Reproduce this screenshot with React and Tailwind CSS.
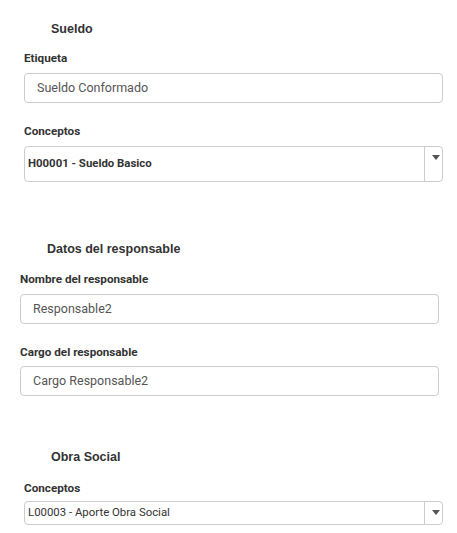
import React from 'react';

const Heading = ({ children, className = '' }) => (
  <div className={`pl-[27px] text-[12.5px] leading-[18px] font-bold text-[#333] font-['Liberation_Sans',Arial,sans-serif] ${className}`}>
    {children}
  </div>
);

const Label = ({ children, className = '' }) => (
  <div className={`text-[11.7px] leading-[18px] font-bold text-[#333] ${className}`}>{children}</div>
);

const TextInput = ({ value, className = '' }) => (
  <div className={`h-[30px] flex items-center px-3 border border-[#ccc] rounded-[4px] bg-white text-[12.5px] text-[#555] ${className}`}>
    {value}
  </div>
);

const Select = ({ value, bold, tall }) => (
  <div className={`relative flex border border-[#ccc] rounded-[4px] bg-white text-[#333] text-[11.4px] ${tall ? 'h-[36px]' : 'h-[24px]'}`}>
    <div className={`flex-1 flex items-center pl-[3px] truncate ${bold ? 'font-bold' : ''}`}>{value}</div>
    <div className="w-[18px] border-l border-[#ccc] relative">
      <span className="absolute top-[8px] left-[7px] w-0 h-0 border-l-[4px] border-r-[4px] border-t-[5px] border-l-transparent border-r-transparent border-t-[#555]" />
    </div>
  </div>
);

export default function App() {
  return (
    <div className="w-[457px] h-[533px] bg-white font-['Roboto',sans-serif] overflow-hidden">
      {/* Sueldo */}
      <section className="pl-[24px] pr-[14px] pt-[20px]">
        <Heading>Sueldo</Heading>
        <Label className="mt-[11px]">Etiqueta</Label>
        <TextInput value="Sueldo Conformado" className="mt-[6px]" />
        <Label className="mt-[19px]">Conceptos</Label>
        <div className="mt-[6px]">
          <Select value="H00001 - Sueldo Basico" bold tall />
        </div>
      </section>

      {/* Datos del responsable */}
      <section className="pl-[20px] pr-[18px] mt-[58px]">
        <Heading>Datos del responsable</Heading>
        <Label className="mt-[12px]">Nombre del responsable</Label>
        <TextInput value="Responsable2" className="mt-[6px] h-[29px]" />
        <Label className="mt-[19px]">Cargo del responsable</Label>
        <TextInput value="Cargo Responsable2" className="mt-[5px]" />
      </section>

      {/* Obra Social */}
      <section className="pl-[24px] pr-[14px] mt-[52px]">
        <Heading>Obra Social</Heading>
        <Label className="mt-[13px]">Conceptos</Label>
        <div className="mt-[4px]">
          <Select value="L00003 - Aporte Obra Social" />
        </div>
      </section>
    </div>
  );
}
